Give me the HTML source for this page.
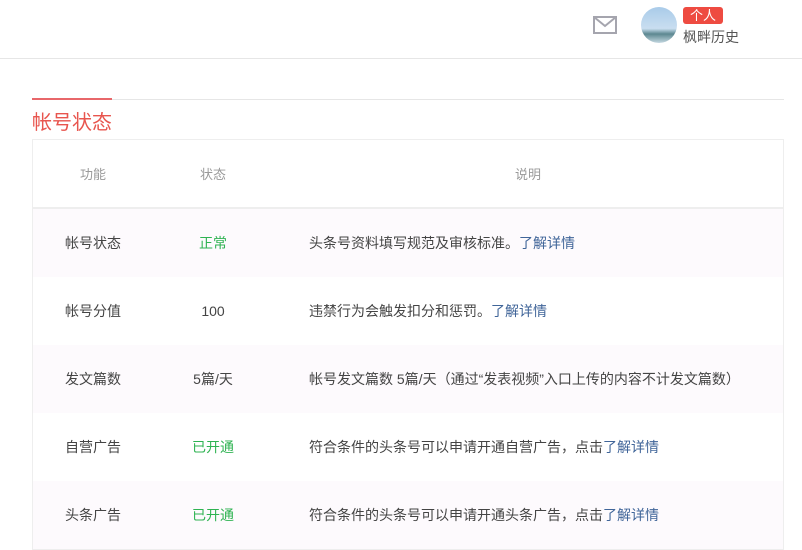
<!DOCTYPE html>
<html><head><meta charset="utf-8"><style>
body{margin:0;width:802px;height:539px;overflow:hidden;background:#fff;font-family:"Liberation Sans","Noto Sans CJK SC",sans-serif;}
.top{position:absolute;left:0;top:0;width:802px;height:58px;border-bottom:1px solid #e6e6e6;}
.t{position:absolute;font-size:14px;color:#333;white-space:nowrap;}
table{position:absolute;left:32px;top:139px;width:752px;border-collapse:collapse;border:1px solid #eee;}
td,th{height:68px;padding:0;font-size:14px;color:#444;font-weight:normal;text-align:center;}
th{color:#999;font-size:13px;height:67px;border-bottom:2px solid #eee;}
td.d{text-align:left;padding-left:36px;}
tr.p td{background:#fdfafd;}
.g{color:#2fb352}.b{color:#406599}
</style></head><body>
<div class="top">
<svg style="position:absolute;left:593px;top:16px" width="24" height="18" viewBox="0 0 24 18"><rect x="1" y="1" width="22" height="16" fill="none" stroke="#a5a5ae" stroke-width="2"/><path d="M1 1L12 10L23 1" fill="none" stroke="#a5a5ae" stroke-width="2"/></svg>
<div style="position:absolute;left:641px;top:7px;width:36px;height:36px;border-radius:50%;background:linear-gradient(#a9cbe9 0%,#c9def0 60%,#5c8790 75%,#c5d8e2 100%)"></div>
<div style="position:absolute;left:683px;top:7px;width:40px;height:17px;background:#ee4b41;border-radius:3px;color:#fff;font-size:13px;line-height:17px;text-align:center">个人</div>
<div class="t" style="left:683px;top:27px;color:#555">枫畔历史</div>
</div>
<div style="position:absolute;left:32px;top:99px;width:752px;height:1px;background:#e6e6e6"></div>
<div style="position:absolute;left:32px;top:98px;width:80px;height:2px;background:#e8676a"></div>
<div style="position:absolute;left:32px;top:106px;font-size:20px;color:#e8554e">帐号状态</div>
<table>
<tr><th style="width:120px">功能</th><th style="width:120px">状态</th><th>说明</th></tr>
<tr class="p"><td>帐号状态</td><td class="g">正常</td><td class="d">头条号资料填写规范及审核标准。<span class="b">了解详情</span></td></tr>
<tr><td>帐号分值</td><td>100</td><td class="d">违禁行为会触发扣分和惩罚。<span class="b">了解详情</span></td></tr>
<tr class="p"><td>发文篇数</td><td>5篇/天</td><td class="d">帐号发文篇数 5篇/天（通过“发表视频”入口上传的内容不计发文篇数）</td></tr>
<tr><td>自营广告</td><td class="g">已开通</td><td class="d">符合条件的头条号可以申请开通自营广告，点击<span class="b">了解详情</span></td></tr>
<tr class="p"><td>头条广告</td><td class="g">已开通</td><td class="d">符合条件的头条号可以申请开通头条广告，点击<span class="b">了解详情</span></td></tr>
</table>
</body></html>
